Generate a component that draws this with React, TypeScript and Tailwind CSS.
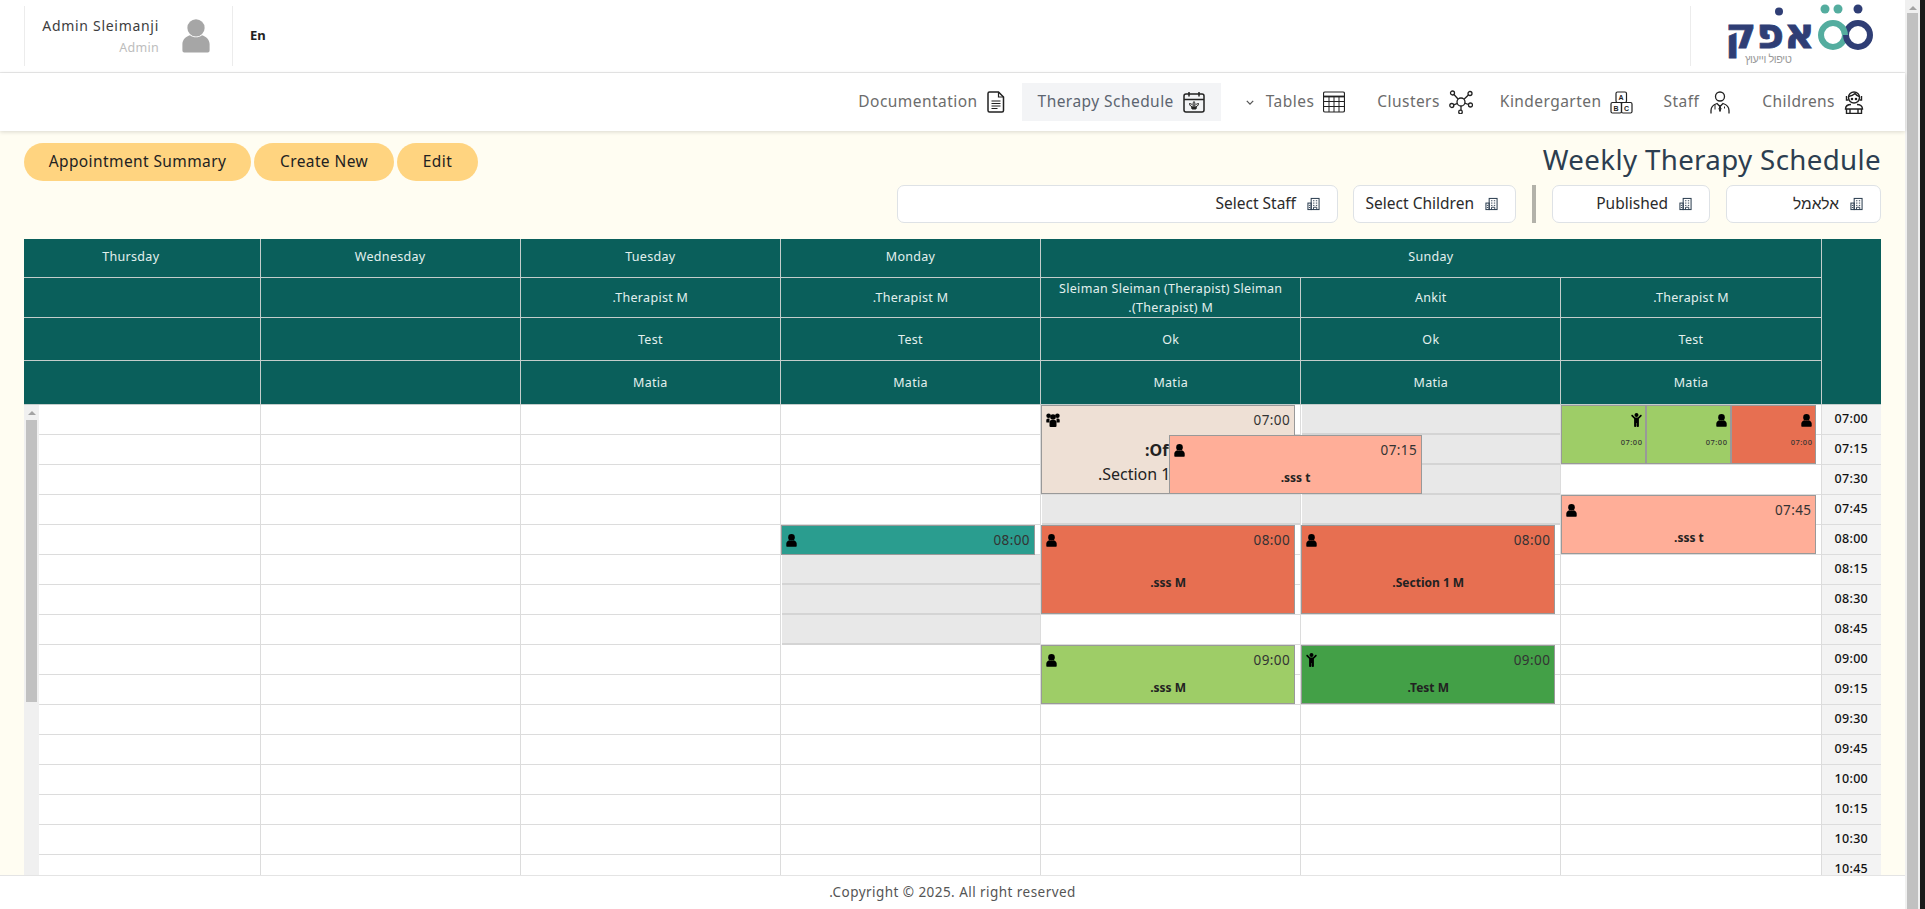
import React from "react";
import { FaChild } from "react-icons/fa";

const times = ["07:00","07:15","07:30","07:45","08:00","08:15","08:30","08:45","09:00","09:15","09:30","09:45","10:00","10:15","10:30","10:45"];

const Person = ({ className = "w-[11px] h-[13px] fill-black" }: { className?: string }) => (
  <svg viewBox="0 0 11 13" className={className}>
    <circle cx="5.5" cy="3.4" r="3.3" />
    <path d="M0.3 12V9.6C0.3 7.8 1.8 6.6 3.2 6.2C4.6 7.3 6.4 7.3 7.8 6.2C9.2 6.6 10.7 7.8 10.7 9.6V12Q10.7 12.8 10 12.8H1Q0.3 12.8 0.3 12Z" />
  </svg>
);

const Group = () => (
  <svg viewBox="0 0 14 14" className="w-[14px] h-[14px] fill-black">
    <circle cx="2.6" cy="2.8" r="2.3" />
    <circle cx="11.4" cy="2.8" r="2.3" />
    <circle cx="7" cy="4" r="2.8" />
    <path d="M0.3 9V7Q0.3 5.5 2 5.500H3.500V9.500H1Q0.3 9.500 0.3 9ZM13.700 9V7Q13.700 5.500 12 5.500H10.500V9.500H13Q13.700 9.500 13.700 9Z" />
    <path d="M3.500 13V9.800Q3.500 7 5.500 7H8.500Q10.500 7 10.500 9.800V13Q10.500 14 9.500 14H4.500Q3.500 14 3.500 13Z" />
  </svg>
);

const Child = () => <FaChild className="w-[11px] h-[14px] text-black" />;

const Building = () => (
  <svg viewBox="0 0 14 14" className="w-[13px] h-[14px] fill-none stroke-[#2c3e50]" strokeWidth="1.1">
    <rect x="4.5" y="1" width="8.5" height="12" />
    <rect x="1" y="6" width="3.5" height="7" />
    <path d="M6.5 3.5h1.5M9.5 3.5h1.5M6.5 6h1.5M9.5 6h1.5M6.5 8.5h1.5M9.5 8.5h1.5M2 8.5h1.5M2 10.8h1.5M7 13v-2.5h3.5V13" strokeWidth="1" />
  </svg>
);

const DocIcon = () => (
  <svg viewBox="0 0 18 22" className="w-[18px] h-[22px] fill-none stroke-[#222]" strokeWidth="1.5">
    <path d="M2.5 1h9l5 5v13.5a1.5 1.5 0 0 1-1.5 1.5H2.5A1.5 1.5 0 0 1 1 19.5V2.5A1.5 1.5 0 0 1 2.5 1Z" />
    <path d="M11.5 1v5h5M4.500 10h9M4.500 12.500h9M4.500 15h9M4.500 17.500h6" strokeWidth="1.2" />
  </svg>
);

const CalIcon = () => (
  <svg viewBox="0 0 22 22" className="w-[22px] h-[22px] fill-none stroke-[#222]" strokeWidth="1.5">
    <rect x="1" y="3" width="20" height="18" rx="2" />
    <path d="M1 8.500h20M6 1v4.500M16 1v4.500" />
    <path d="M11 10.500c-1.300 1.500-1.300 3.500 0 5 1.300-1.500 1.300-3.500 0-5ZM6.500 12.500c0 2 1.500 3.500 4.500 3.500 3 0 4.500-1.500 4.500-3.500-1 0-2 .5-3 1.500M6.500 12.500c1 0 2 .5 3 1.500" strokeWidth="1" fill="none" />
    <path d="M8.500 16.500l.6 1.500h3.800l.6-1.500Z" strokeWidth="1" fill="#222" />
  </svg>
);

const TableIcon = () => (
  <svg viewBox="0 0 22 22" className="w-[22px] h-[22px] fill-none stroke-[#222]" strokeWidth="1">
    <rect x="0.5" y="1" width="21" height="20" rx="1.5" strokeWidth="1.2" />
    <path d="M0.5 5.500h21" strokeWidth="1.8" />
    <path d="M0.5 10.500h21M0.5 15.500h21M6 5.500V21M11 5.500V21M16 5.500V21" />
  </svg>
);

const ClusterIcon = () => (
  <svg viewBox="0 0 24 24" className="w-[24px] h-[24px] fill-none stroke-[#222]" strokeWidth="1.3">
    <circle cx="12" cy="12" r="4" />
    <circle cx="3.5" cy="3" r="2" />
    <circle cx="21" cy="3.5" r="2" />
    <circle cx="2.8" cy="15.5" r="2" />
    <circle cx="21.5" cy="15" r="2" />
    <circle cx="11.5" cy="22" r="1.8" />
    <path d="M5 4.500l4.200 4.700M19.400 5l-4.400 4.200M4.600 14.800l4-1.400M19.600 14.500l-4-1.400M12 16v4.200" />
  </svg>
);

const BlocksIcon = () => (
  <svg viewBox="0 0 23 23" className="w-[23px] h-[23px] fill-none stroke-[#222]" strokeWidth="1.2">
    <rect x="6" y="1" width="10.5" height="10.5" rx="1.5" />
    <rect x="1" y="11.5" width="10.5" height="10.5" rx="1.5" />
    <rect x="11.5" y="11.5" width="10.5" height="10.5" rx="1.5" />
    <text x="11.2" y="9" fontSize="7" fontWeight="700" textAnchor="middle" fill="#222" stroke="none" fontFamily="Liberation Sans, sans-serif">A</text>
    <text x="6.2" y="19.5" fontSize="7" fontWeight="700" textAnchor="middle" fill="#222" stroke="none" fontFamily="Liberation Sans, sans-serif">B</text>
    <text x="16.8" y="19.5" fontSize="7" fontWeight="700" textAnchor="middle" fill="#222" stroke="none" fontFamily="Liberation Sans, sans-serif">C</text>
  </svg>
);

const StaffIcon = () => (
  <svg viewBox="0 0 20 23" className="w-[20px] h-[23px] fill-none stroke-[#222]" strokeWidth="1.3">
    <circle cx="10" cy="5.5" r="4.5" />
    <path d="M1 22.500v-3c0-4 3-6 6-7l3 3 3-3c3 1 6 3 6 7v3" />
    <path d="M10 15.500l-1 2 1 3 1-3ZM5 13.500v5M14.500 15.500v2" fill="#222" strokeWidth="1" />
  </svg>
);

const KidIcon = () => (
  <svg viewBox="0 0 20 23" className="w-[20px] h-[23px] fill-none stroke-[#222]" strokeWidth="1.4">
    <circle cx="10" cy="6.5" r="5.5" />
    <path d="M4.500 5.500c3-.5 5-1.500 6.500-3 1 1.500 2.500 2.500 4.500 3M2.500 5v4h2M17.500 5v4h-2M7 13.500c-3 0-5.500 1.500-5.500 4.500h17c0-3-2.500-4.500-5.500-4.500M2.500 18v4.500h15V18M6 18v4.500M14 18v4.500" />
    <circle cx="8" cy="8" r=".6" fill="#222" />
    <circle cx="12" cy="8" r=".6" fill="#222" />
  </svg>
);

const Logo = () => (
  <svg viewBox="0 0 165 64" className="w-[165px] h-[64px]">
    <text x="2" y="44" fontSize="42" fontWeight="700" fill="#2f3e75" stroke="#2f3e75" strokeWidth="0.8" textLength="90" lengthAdjust="spacingAndGlyphs" fontFamily="'DejaVu Sans', sans-serif">אפק</text>
    <circle cx="56" cy="7.5" r="4" fill="#2f3e75" />
    <circle cx="110" cy="31" r="12" fill="none" stroke="#54ad9f" strokeWidth="6" />
    <circle cx="135" cy="31" r="12" fill="none" stroke="#2f3e75" strokeWidth="6" />
    <path d="M118.500 22.500A12 12 0 0 1 122 31" fill="none" stroke="#54ad9f" strokeWidth="6" />
    <circle cx="102" cy="5" r="4.5" fill="#54ad9f" />
    <circle cx="115" cy="5" r="4.5" fill="#54ad9f" />
    <circle cx="135" cy="5" r="4.5" fill="#2f3e75" />
    <text x="22" y="59" fontSize="11" fill="#9a9a9a" textLength="47" fontFamily="'Liberation Sans', sans-serif">טיפול וייעוץ</text>
  </svg>
);

const H = ({ children, className = "" }: { children?: React.ReactNode; className?: string }) => (
  <div className={"flex items-center justify-center text-center text-[12.5px] leading-[19px] tracking-[0.3px] text-[#e3f0ee] border-l border-b border-[#c4cdcb] " + className}>{children}</div>
);

type Ev = { pos: string; bg: string; time: string; icon: "p" | "c" | "u"; text?: React.ReactNode };

const Event = ({ e }: { e: Ev }) => (
  <div className={"absolute z-10 flex flex-col border border-[#999] " + e.pos + " " + e.bg}>
    <div className="h-[28px] shrink-0 flex items-center justify-between px-[4px]">
      {e.icon === "p" ? <Person /> : e.icon === "c" ? <Child /> : <Group />}
      <span className="text-[13.5px] tracking-[0.4px] text-[#333]">{e.time}</span>
    </div>
    {e.text ? <div className="flex-1 pb-[1px] flex items-center justify-center text-[12px] font-bold text-[#222]">{e.text}</div> : null}
  </div>
);

const Small = ({ icon, bg }: { icon: "p" | "c"; bg: string }) => (
  <div className={"w-[85px] h-[59px] flex flex-col items-end pr-[3px] border border-[#999] " + bg}>
    <div className="h-[28px] flex items-center">{icon === "p" ? <Person /> : <Child />}</div>
    <span className="text-[7.5px] tracking-[0.5px] font-medium text-[#333] mt-[3px]">07:00</span>
  </div>
);

const Col = ({ gray = [], children }: { gray?: number[]; children?: React.ReactNode }) => (
  <div className="relative border-l border-[#dcdcdc] min-w-0">
    {times.map((t, i) =>
      gray.includes(i) ? (
        <div key={t} className="h-[30px] bg-[#e8e8e8] border-b-2 border-[#d4d4d4] ml-[1px]" />
      ) : (
        <div key={t} className="h-[30px] bg-white border-b border-[#dcdcdc]" />
      )
    )}
    {children}
  </div>
);

const NavItem = ({ label, icon, className = "px-[16px] gap-[9px] text-[#6c6c6c]", chev }: { label: string; icon: React.ReactNode; className?: string; chev?: boolean }) => (
  <div className={"h-[38px] flex items-center text-[15.5px] tracking-[0.45px] " + className}>
    {chev ? <svg viewBox="0 0 10 6" className="w-[8px] h-[5px] mr-[3px] fill-none stroke-[#555]" strokeWidth="1.6"><path d="M1 1l4 4 4-4" /></svg> : null}
    <span>{label}</span>
    {icon}
  </div>
);

const Filter = ({ label, className }: { label: string; className: string }) => (
  <div className={"h-[38px] bg-white border border-[#dee2e6] rounded-[7px] flex items-center justify-end gap-[11px] pr-[17px] text-[15.5px] text-[#2b2b2b] " + className}>
    <span>{label}</span>
    <Building />
  </div>
);

const Btn = ({ label, className }: { label: string; className: string }) => (
  <div className={"h-[38px] rounded-full bg-[#ffd480] flex items-center justify-center text-[15.5px] tracking-[0.4px] text-[#222] " + className}>{label}</div>
);

export default function App() {
  return (
    <div className="h-[909px] w-[1925px] overflow-hidden flex bg-[#1a1a1a] font-['Noto_Sans',sans-serif]">
      <div className="w-[1905px] h-full flex flex-col">
        <header className="h-[73px] shrink-0 bg-white border-b border-[#eaeaea] flex items-center justify-between px-[24px]">
          <div className="flex items-center h-[60px]">
            <div className="w-[209px] h-full border-x border-[#ececec] flex items-center pl-[16px]">
              <div className="w-[118px] text-right whitespace-nowrap">
                <div className="text-[14px] leading-[20px] tracking-[0.7px] text-[#3d3d3d]">Admin Sleimanji</div>
                <div className="text-[12.5px] leading-[18px] mt-[3px] tracking-[0.3px] text-[#bdbdbd]">Admin</div>
              </div>
              <Person className="w-[30px] h-[34px] ml-[22px] fill-[#a6a6a6]" />
            </div>
            <span className="ml-[17px] text-[13px] font-bold text-[#222]">En</span>
          </div>
          <div className="h-[60px] w-[198px] border-l border-[#ececec] flex items-center justify-end -mr-[7px]">
            <Logo />
          </div>
        </header>
        <nav className="h-[58px] shrink-0 bg-white flex items-center justify-end pr-[25px] shadow-[0_1px_4px_rgba(0,0,0,0.15)] relative z-20">
          <NavItem label="Documentation" icon={<DocIcon />} className="px-[16px] gap-[9px] mr-[1px] text-[#6c6c6c]" />
          <NavItem label="Therapy Schedule" icon={<CalIcon />} className="px-[16px] gap-[9px] mr-[9px] bg-[#f3f4f6] text-[#5c6470]" />
          <NavItem label="Tables" icon={<TableIcon />} chev />
          <NavItem label="Clusters" icon={<ClusterIcon />} className="px-[16px] gap-[9px] -mr-[5px] text-[#6c6c6c]" />
          <NavItem label="Kindergarten" icon={<BlocksIcon />} className="px-[16px] gap-[9px] -mr-[2px] text-[#6c6c6c]" />
          <NavItem label="Staff" icon={<StaffIcon />} className="px-[16px] gap-[11px] text-[#6c6c6c]" />
          <NavItem label="Childrens" icon={<KidIcon />} />
        </nav>
        <main className="flex-1 min-h-0 bg-[#fffdf2] px-[24px] pt-[12px] flex flex-col">
          <div className="h-[96px] shrink-0 flex justify-between">
            <div className="flex gap-[3px]">
              <Btn label="Appointment Summary" className="w-[227px]" />
              <Btn label="Create New" className="w-[140px]" />
              <Btn label="Edit" className="w-[81px]" />
            </div>
            <div className="flex flex-col items-end">
              <h1 className="h-[42px] pb-[8px] flex items-center text-[27.7px] tracking-[0.35px] font-normal text-[#2c3e50] whitespace-nowrap">Weekly Therapy Schedule</h1>
              <div className="flex items-center">
                <Filter label="Select Staff" className="w-[441px]" />
                <Filter label="Select Children" className="w-[163px] ml-[15px]" />
                <div className="w-[4px] h-[38px] bg-[#b3b2aa] mx-[16px]" />
                <Filter label="Published" className="w-[158px]" />
                <Filter label="אלאמל" className="w-[155px] ml-[16px]" />
              </div>
            </div>
          </div>
          <div className="grid grid-cols-[235.6px_repeat(6,1fr)_60.4px] grid-rows-[39px_40px_43px_44px] bg-[#0a5f5b] shrink-0">
            <H className="pb-[3px] pr-[22px] border-l-0">Thursday</H>
            <H className="pb-[3px]">Wednesday</H>
            <H className="pb-[3px]">Tuesday</H>
            <H className="pb-[3px]">Monday</H>
            <H className="pb-[3px] col-span-3">Sunday</H>
            <div className="row-span-4 border-l border-b border-[#c4cdcb]" />
            <H className="border-l-0" /><H /><H>.Therapist M</H><H>.Therapist M</H>
            <H>
              <span>Sleiman Sleiman (Therapist) Sleiman<br />.(Therapist) M</span>
            </H>
            <H>Ankit</H><H>.Therapist M</H>
            <H className="border-l-0" /><H /><H>Test</H><H>Test</H><H>Ok</H><H>Ok</H><H>Test</H>
            <H className="border-l-0" /><H /><H>Matia</H><H>Matia</H><H>Matia</H><H>Matia</H><H>Matia</H>
          </div>
          <div className="flex-1 min-h-0 overflow-hidden grid grid-cols-[235.6px_repeat(6,1fr)_60.4px] bg-white">
            <div className="flex">
              <div className="w-[15px] h-[470px] bg-[#f0f0f0] flex flex-col items-center shrink-0">
                <div className="mt-[6px] w-0 h-0 border-x-[4px] border-x-transparent border-b-[4px] border-b-[#a3a3a3]" />
                <div className="mt-[5px] w-[11px] h-[282px] bg-[#c1c1c1]" />
              </div>
              <div className="flex-1">
                {times.map((t) => <div key={t} className="h-[30px] bg-white border-b border-[#dcdcdc]" />)}
              </div>
            </div>
            <Col />
            <Col />
            <Col gray={[5, 6, 7]}>
              <Event e={{ pos: "top-[120px] left-0 w-[254px] h-[30px]", bg: "bg-[#2a9d8f]", time: "08:00", icon: "p" }} />
            </Col>
            <Col gray={[3]}>
              <Event e={{ pos: "top-0 left-0 w-[254px] h-[89px]", bg: "bg-[#eee0d5]", time: "07:00", icon: "u", text: (
                <div className="text-center text-[16px] leading-[24px] text-[#222] whitespace-nowrap -mt-[3px]">
                  <div className="font-bold pl-[6px]">:Office</div>
                  <div className="font-normal pr-[22px]">.Section 1 sss M</div>
                </div>
              ) }} />
              <Event e={{ pos: "top-[30px] left-[128px] w-[253px] h-[59px] z-20", bg: "bg-[#ffae98]", time: "07:15", icon: "p", text: ".sss t" }} />
              <Event e={{ pos: "top-[120px] left-0 w-[254px] h-[89px]", bg: "bg-[#e76f51]", time: "08:00", icon: "p", text: ".sss M" }} />
              <Event e={{ pos: "top-[240px] left-0 w-[254px] h-[59px]", bg: "bg-[#9ecd67]", time: "09:00", icon: "p", text: ".sss M" }} />
            </Col>
            <Col gray={[0, 1, 2, 3]}>
              <Event e={{ pos: "top-[120px] left-0 w-[254px] h-[89px]", bg: "bg-[#e76f51]", time: "08:00", icon: "p", text: ".Section 1 M" }} />
              <Event e={{ pos: "top-[240px] left-0 w-[254px] h-[59px]", bg: "bg-[#43a047]", time: "09:00", icon: "c", text: ".Test M" }} />
            </Col>
            <Col>
              <div className="absolute z-10 top-0 left-0 flex">
                <Small icon="c" bg="bg-[#9ecd67]" />
                <Small icon="p" bg="bg-[#9ecd67]" />
                <Small icon="p" bg="bg-[#e76f51]" />
              </div>
              <Event e={{ pos: "top-[90px] left-0 w-[255px] h-[59px]", bg: "bg-[#ffae98]", time: "07:45", icon: "p", text: ".sss t" }} />
            </Col>
            <div className="bg-[#f3f3f3] border-l border-[#dcdcdc]">
              {times.map((t) => (
                <div key={t} className="h-[30px] border-b border-[#dcdcdc] flex items-center justify-center text-[12.5px] font-medium tracking-[0.3px] text-[#111]">{t}</div>
              ))}
            </div>
          </div>
        </main>
        <footer className="h-[34px] shrink-0 bg-white border-t border-[#e4e4e4] flex items-center justify-center text-[13.5px] tracking-[0.45px] text-[#555]">.Copyright © 2025. All right reserved</footer>
      </div>
      <div className="w-[15px] h-full bg-[#f0f0f0] flex flex-col items-center">
        <div className="mt-[6px] w-0 h-0 border-x-[4px] border-x-transparent border-b-[4px] border-b-[#a3a3a3]" />
        <div className="mt-[3px] w-[11px] flex-1 bg-[#c1c1c1]" />
      </div>
      <div className="w-[5px] h-full" />
    </div>
  );
}
